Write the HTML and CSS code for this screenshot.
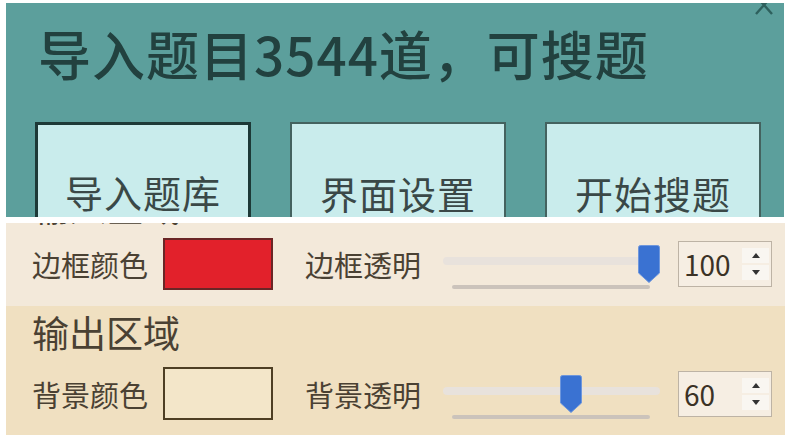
FILE: index.html
```html
<!DOCTYPE html>
<html lang="zh">
<head>
<meta charset="utf-8">
<title>搜题</title>
<link rel="stylesheet" href="styles.css">
</head>
<body>
<div class="top">
  <div class="close">
    <svg width="18" height="20" viewBox="0 0 18 20"><path d="M1 1 L17 19 M17 1 L1 19" stroke="#2e605d" stroke-width="2.4" fill="none"/></svg>
  </div>
  <h1 class="title">导入题目3544道，可搜题</h1>
  <div class="buttons">
    <button class="btn btn-focus">导入题库</button>
    <button class="btn">界面设置</button>
    <button class="btn">开始搜题</button>
  </div>
</div>
<div class="settings">
  <section class="sec sec-input">
    <h2 class="sec-head">输入区域</h2>
    <div class="row">
      <span class="label">边框颜色</span>
      <span class="swatch swatch-red"></span>
      <span class="label label2">边框透明</span>
      <div class="slider">
        <div class="groove"></div>
        <div class="ticks"></div>
        <svg class="handle" style="left:195px" width="22" height="38" viewBox="0 0 22 38"><path d="M2.5 0.5 H19.5 Q21.5 0.5 21.5 2.5 V28 L11 37.5 L0.5 28 V2.5 Q0.5 0.5 2.5 0.5 Z" fill="#3a72d2" stroke="#6f97dc" stroke-width="1"/></svg>
      </div>
      <div class="spin">
        <span class="spin-val">100</span>
        <span class="spin-btns"><span class="sb"><i class="tri-up"></i></span><span class="sb"><i class="tri-down"></i></span></span>
      </div>
    </div>
  </section>
  <section class="sec sec-output">
    <h2 class="sec-head">输出区域</h2>
    <div class="row">
      <span class="label">背景颜色</span>
      <span class="swatch swatch-bg"></span>
      <span class="label label2">背景透明</span>
      <div class="slider">
        <div class="groove"></div>
        <div class="ticks"></div>
        <svg class="handle" style="left:117px" width="22" height="38" viewBox="0 0 22 38"><path d="M2.5 0.5 H19.5 Q21.5 0.5 21.5 2.5 V28 L11 37.5 L0.5 28 V2.5 Q0.5 0.5 2.5 0.5 Z" fill="#3a72d2" stroke="#6f97dc" stroke-width="1"/></svg>
      </div>
      <div class="spin">
        <span class="spin-val">60</span>
        <span class="spin-btns"><span class="sb"><i class="tri-up"></i></span><span class="sb"><i class="tri-down"></i></span></span>
      </div>
    </div>
  </section>
</div>
</body>
</html>
```

FILE: styles.css
```css
body {
  margin: 0;
  background: #ffffff;
  font-family: "Noto Sans CJK SC", "Noto Sans", sans-serif;
}

.top {
  position: relative;
  margin: 3px 6px 0 6px;
  width: 778px;
  height: 214px;
  background: #5c9f9c;
  overflow: hidden;
}

.close {
  position: absolute;
  left: 749px;
  top: -8px;
  width: 18px;
  height: 20px;
}

.close svg {
  display: block;
}

.title {
  margin: 0;
  padding: 18px 0 0 32px;
  font-size: 53px;
  line-height: 64px;
  font-weight: 500;
  letter-spacing: 1px;
  color: #22413f;
  white-space: nowrap;
}

.buttons {
  display: flex;
  gap: 39px;
  margin: 37px 0 0 29px;
}

.btn {
  display: block;
  flex: none;
  width: 216px;
  box-sizing: border-box;
  background: #c9ecec;
  border: 2px solid #44625f;
  padding: 46px 0 50px;
  margin: 0;
  font-family: "Noto Sans CJK SC", sans-serif;
  font-size: 38px;
  line-height: 44px;
  letter-spacing: 1px;
  color: #3a4847;
  text-align: center;
}

.btn-focus {
  border: 3px solid #1d3937;
  padding-top: 45px;
}

.settings {
  margin: 6px 5px 0 6px;
}

.sec {
  overflow: hidden;
  color: #4a4133;
}

.sec-input {
  height: 83px;
  background: #f3e9da;
}

.sec-output {
  height: 129px;
  padding-top: 6px;
  box-sizing: border-box;
  background: #f0e0c1;
}

.sec-head {
  margin: 0;
  padding-left: 26px;
  height: 40px;
  font-size: 37px;
  line-height: 40px;
  font-weight: normal;
  white-space: nowrap;
}

.sec-input .sec-head {
  margin-top: -37px;
}

.row {
  display: flex;
  align-items: center;
  height: 52px;
  padding-left: 26px;
}

.sec-input .row {
  margin-top: 12px;
}

.sec-output .row {
  margin-top: 15px;
  height: 53px;
}

.label {
  flex: none;
  width: 116px;
  font-size: 29px;
  line-height: 36px;
  white-space: nowrap;
}

.label2 {
  margin-left: 32px;
}

.swatch {
  flex: none;
  width: 110px;
  height: 100%;
  margin-left: 15px;
  box-sizing: border-box;
  border: 2px solid #4e3f24;
}

.swatch-red {
  background: #e2212b;
  border-color: #6a2626;
}

.swatch-bg {
  background: #f3e6c9;
  border-color: #4e3f24;
}

.slider {
  position: relative;
  flex: none;
  display: flex;
  flex-direction: column;
  width: 217px;
  height: 52px;
  margin-left: 22px;
}

.groove {
  margin-top: 19px;
  height: 8px;
  border-radius: 4px;
  background: #e8e2dc;
}

.ticks {
  margin: 20px 10px 0 9px;
  height: 4px;
  border-radius: 2px;
  background: #cbc3bb;
}

.handle {
  position: absolute;
  top: 7px;
  display: block;
}

.spin {
  flex: none;
  display: flex;
  align-items: center;
  justify-content: space-between;
  width: 94px;
  height: 46px;
  margin-left: 18px;
  box-sizing: border-box;
  padding: 0 2px 0 5px;
  border: 1px solid #bdb3a5;
  background: #f6eee3;
}

.spin-val {
  font-size: 28px;
  line-height: 32px;
  color: #3b3226;
}

.spin-btns {
  display: flex;
  flex-direction: column;
  gap: 2px;
}

.sb {
  display: flex;
  align-items: center;
  justify-content: center;
  width: 27px;
  height: 15px;
  background: #f9f6f1;
}

.tri-up {
  width: 0;
  height: 0;
  border-left: 4px solid transparent;
  border-right: 4px solid transparent;
  border-bottom: 5px solid #333333;
}

.tri-down {
  width: 0;
  height: 0;
  border-left: 4px solid transparent;
  border-right: 4px solid transparent;
  border-top: 5px solid #333333;
}
```
